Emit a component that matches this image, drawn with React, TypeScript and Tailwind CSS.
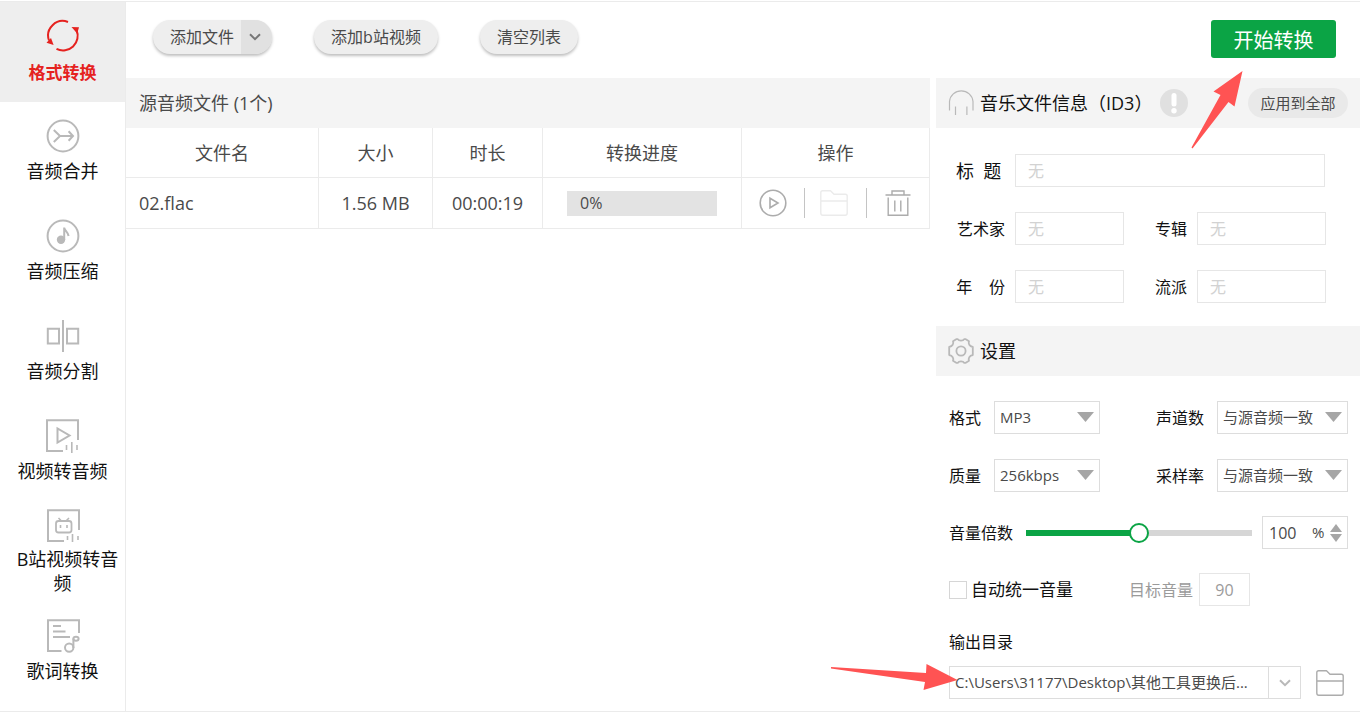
import { useState, type ReactNode } from "react";

type IconProps = { className?: string };

const line = {
  fill: "none",
  stroke: "currentColor",
  strokeWidth: 2,
} as const;

function ConvertIcon() {
  return (
    <svg viewBox="0 0 34 34" width="34" height="34" {...line}>
      <path d="M22 3A14.6 14.6 0 0 0 3 21.500" />
      <path d="M10.500 29.800A14.600 14.600 0 0 0 30.500 11" />
      <path d="M0.500 23.800 5 19 7.600 26Z" fill="currentColor" stroke="none" />
      <path d="M25.500 8 33 8.200 31.200 14.600Z" fill="currentColor" stroke="none" />
    </svg>
  );
}

function MergeIcon() {
  return (
    <svg viewBox="0 0 34 34" width="34" height="34" {...line}>
      <circle cx="17" cy="17" r="15.4" />
      <path d="M7.8 11 14 17 7.8 23M13.5 17H27M22.6 12.2 27 17 22.6 21.8" />
    </svg>
  );
}

function CompressIcon() {
  return (
    <svg viewBox="0 0 34 34" width="34" height="34" {...line}>
      <circle cx="17" cy="17" r="15.4" />
      <circle cx="15" cy="20.8" r="4.2" fill="currentColor" stroke="none" />
      <path d="M18.2 21V8.5C18.6 12 22 13 22.6 17" />
    </svg>
  );
}

function SplitIcon() {
  return (
    <svg viewBox="0 0 34 34" width="34" height="34" {...line}>
      <path d="M17 1V33M1.8 9.8H13V24.6H1.8ZM21 9.8H32.2V24.6H21Z" />
    </svg>
  );
}

function VideoIcon() {
  return (
    <svg viewBox="0 0 34 34" width="34" height="34" {...line}>
      <path d="M32 21V1.2H1V32H17M11.5 9.5V23.5L23.5 16.5Z" />
      <path d="M20.5 26V31M25.8 23V34M31 26V31" strokeWidth="1.6" />
    </svg>
  );
}

function BiliIcon() {
  return (
    <svg viewBox="0 0 34 34" width="34" height="34" {...line}>
      <path d="M33 21V1.2H2V32H18" />
      <rect x="10" y="12" width="15.5" height="11.5" rx="2.5" strokeWidth="1.8" />
      <path d="M12.5 9 15 11.5M23 9 20.5 11.5M14.5 16V19M21 16V19" strokeWidth="1.6" />
      <path d="M21.5 27V31M26.5 25V33M32 27V31" strokeWidth="1.6" />
    </svg>
  );
}

function LyricsIcon() {
  return (
    <svg viewBox="0 0 34 34" width="34" height="34" {...line}>
      <path d="M33 14V1.2H2V32H15.5M7 7H15M7 12.5H19.5M7 18H24" />
      <circle cx="23.2" cy="28.6" r="4.2" />
      <path d="M27.4 29V19.5" />
      <ellipse cx="30" cy="19.8" rx="2.6" ry="2" />
    </svg>
  );
}

function HeadphoneIcon() {
  return (
    <svg viewBox="0 0 26 28" width="26" height="28" fill="none" stroke="#b9b9b9" strokeWidth="1.2">
      <path d="M1.500 21.500V12.500A11.800 11.800 0 0 1 25 12.500V21.500M7.500 17.500V26M18.900 17.500V26" />
    </svg>
  );
}

function GearIcon() {
  return (
    <svg viewBox="0 0 26 26" width="26" height="26" fill="none" stroke="#b9b9b9" strokeWidth="1.8" strokeLinejoin="round">
      <path d="M8.2 1.2H9.8C10.8 3.2 15.2 3.2 16.2 1.2H17.8L21 3.2C20 5.8 21.5 8.4 24.8 9V17C21.5 17.6 20 20.2 21 22.8L17.8 24.8H16.2C15.2 22.8 10.8 22.8 9.8 24.8H8.2L5 22.8C6 20.2 4.5 17.6 1.2 17V9C4.5 8.4 6 5.8 5 3.2Z" />
      <circle cx="13" cy="13" r="4.6" />
    </svg>
  );
}

function FolderIcon({ className }: IconProps) {
  return (
    <svg className={className} viewBox="0 0 28 26" width="28" height="26" fill="none" stroke="currentColor" strokeWidth="1.4" strokeLinejoin="round">
      <path d="M0.8 22.5V2.6C0.8 1.4 1.4 0.8 2.6 0.8H10.5L14 4.2H25.4C26.6 4.2 27.2 4.8 27.2 6V23C27.2 24.4 26.6 25.2 25.2 25.2H2.8C1.4 25.2 0.8 24.4 0.8 23ZM0.8 11H27.2" />
    </svg>
  );
}

function PlayIcon() {
  return (
    <svg viewBox="0 0 28 28" width="28" height="28" fill="none" stroke="currentColor" strokeWidth="1.6">
      <circle cx="14" cy="14" r="12.8" />
      <path d="M11 9.2V18.8L19 14Z" />
    </svg>
  );
}

function TrashIcon() {
  return (
    <svg viewBox="0 0 26 26" width="26" height="26" fill="none" stroke="currentColor" strokeWidth="1.4">
      <path d="M0.5 5H25.5M7 5V1H19V5M3.2 7.5V25.2H22.8V7.5M9.8 10.5V21.5M15.8 10.5V21.5" />
    </svg>
  );
}

function Triangle({ className, up }: IconProps & { up?: boolean }) {
  return (
    <svg className={className} viewBox="0 0 16 10" preserveAspectRatio="none" fill="#a6a6a6">
      <path d={up ? "M0 10H16L8 0Z" : "M0 0H16L8 10Z"} />
    </svg>
  );
}

function Chevron({ className }: IconProps) {
  return (
    <svg className={className} viewBox="0 0 12 8" width="12" height="8" fill="none" stroke="currentColor" strokeWidth="2">
      <path d="M1 1.2 6 6.2 11 1.2" />
    </svg>
  );
}

const single = "gap-1.5 px-2.5 pb-0.5 text-lg text-[#111111]";

const tools: { label: string; icon: ReactNode; style: string }[] = [
  { label: "格式转换", icon: <ConvertIcon />, style: "gap-2 bg-[#eeeeee] px-2.5 text-[17px] font-bold text-[#e5221f]" },
  { label: "音频合并", icon: <MergeIcon />, style: single },
  { label: "音频压缩", icon: <CompressIcon />, style: single },
  { label: "音频分割", icon: <SplitIcon />, style: single },
  { label: "视频转音频", icon: <VideoIcon />, style: single },
  { label: "B站视频转音频", icon: <BiliIcon />, style: "gap-1 px-1.5 indent-2.5 text-lg text-[#111111]" },
  { label: "歌词转换", icon: <LyricsIcon />, style: single },
];

function Sidebar() {
  return (
    <nav className="w-[126px] shrink-0 border-r border-[#ebebeb]">
      {tools.map((t, i) => (
        <button
          key={t.label}
          type="button"
          className={`flex h-[100px] w-full flex-col items-center justify-center leading-6 ${t.style}`}
        >
          <span className={i === 0 ? "indent-0 text-[#e5221f]" : "indent-0 text-[#b9b9b9]"}>{t.icon}</span>
          <span>{t.label}</span>
        </button>
      ))}
    </nav>
  );
}

function Toolbar() {
  return (
    <header className="flex h-[76px] items-start pt-[18px] pr-6 pl-[27px] text-base text-[#4a4a4a]">
      <div className="flex h-[34px] overflow-hidden rounded-full bg-[#eeeeee] shadow-[0_2px_3px_rgba(0,0,0,0.25)]">
        <button type="button" className="w-[88px] pl-2.5">添加文件</button>
        <button type="button" aria-label="更多添加方式" className="flex w-[31px] items-center justify-center bg-[#e1e1e1] pr-1 text-[#777777]">
          <Chevron />
        </button>
      </div>
      <button type="button" className="ml-[42px] h-[34px] w-[124px] rounded-full bg-[#eeeeee] shadow-[0_2px_3px_rgba(0,0,0,0.25)]">
        添加b站视频
      </button>
      <button type="button" className="ml-[42px] h-[34px] w-[98px] rounded-full bg-[#eeeeee] shadow-[0_2px_3px_rgba(0,0,0,0.25)]">
        清空列表
      </button>
      <button type="button" className="ml-auto h-[38px] w-[125px] rounded-[3px] bg-[#0ba445] pt-1 text-xl text-white">
        开始转换
      </button>
    </header>
  );
}

function FileList() {
  return (
    <section className="min-w-0 flex-1 text-lg text-[#4a4a4a]">
      <h2 className="flex h-[50px] items-center bg-[#f4f4f4] px-[13px]">源音频文件 (1个)</h2>
      <table className="w-full table-fixed border-separate border-spacing-0 text-center">
        <colgroup>
          <col />
          <col className="w-[114px]" />
          <col className="w-[110px]" />
          <col className="w-[199px]" />
          <col className="w-[188px]" />
        </colgroup>
        <thead>
          <tr className="h-[50px]">
            {["文件名", "大小", "时长", "转换进度", "操作"].map((h) => (
              <th key={h} className="border-r border-b border-[#ebebeb] p-0 font-normal">{h}</th>
            ))}
          </tr>
        </thead>
        <tbody>
          <tr className="h-[51px]">
            <td className="border-r border-b border-[#ebebeb] px-[13px] py-0 text-left">02.flac</td>
            <td className="border-r border-b border-[#ebebeb] p-0">1.56 MB</td>
            <td className="border-r border-b border-[#ebebeb] p-0">00:00:19</td>
            <td className="border-r border-b border-[#ebebeb] px-6 py-0">
              <div className="h-[25px] bg-[#e3e3e3] px-[13px] text-left text-base leading-[25px]">0%</div>
            </td>
            <td className="border-r border-b border-[#ebebeb] p-0">
              <div className="flex items-center justify-center text-[#acacac]">
                <button type="button" aria-label="播放" className="flex w-[62px] justify-center">
                  <PlayIcon />
                </button>
                <button type="button" aria-label="打开文件夹" disabled className="flex h-[30px] w-16 items-center justify-center border-x border-[#c4c4c4] pr-1 text-[#ebebeb]">
                  <FolderIcon />
                </button>
                <button type="button" aria-label="删除" className="flex w-[62px] justify-center">
                  <TrashIcon />
                </button>
              </div>
            </td>
          </tr>
        </tbody>
      </table>
    </section>
  );
}

function TagField({ id, label, labelClass, boxClass }: { id: string; label: string; labelClass: string; boxClass: string }) {
  return (
    <>
      <label htmlFor={id} className={labelClass}>{label}</label>
      <input
        id={id}
        type="text"
        placeholder="无"
        className={`h-[33px] border border-[#e6e6e6] px-3 text-base text-[#4a4a4a] outline-none placeholder:text-[#d2d2d2] ${boxClass}`}
      />
    </>
  );
}

function Id3Panel() {
  return (
    <section>
      <div className="flex h-[50px] items-center bg-[#f4f4f4] pr-3 pl-3">
        <HeadphoneIcon />
        <h2 className="ml-1.5 text-lg whitespace-nowrap text-[#111111]">音乐文件信息（ID3）</h2>
        <svg className="ml-2" viewBox="0 0 28 28" width="28" height="28" role="img" aria-label="提示">
          <circle cx="14" cy="14" r="14" fill="#e0e0e0" />
          <path d="M14 6.5V15" stroke="#fff" strokeWidth="5" strokeLinecap="round" />
          <circle cx="14" cy="21.8" r="2.7" fill="#fff" />
        </svg>
        <button type="button" className="ml-auto h-[30px] w-[100px] rounded-full bg-[#e9e9e9] text-[15px] text-[#4a4a4a]">
          应用到全部
        </button>
      </div>
      <div className="grid grid-cols-[49px_119px_63px_139px] items-center gap-y-[25px] pt-[26px] pb-[23px] pl-5 text-base text-[#111111]">
        <TagField id="title" label="标  题" labelClass="whitespace-pre text-lg" boxClass="col-span-3 ml-2.5 w-[310px]" />
        <TagField id="artist" label="艺术家" labelClass="text-right" boxClass="ml-2.5 w-[109px]" />
        <TagField id="album" label="专辑" labelClass="text-right" boxClass="ml-2.5 w-[129px]" />
        <TagField id="year" label="年    份" labelClass="whitespace-pre text-right" boxClass="ml-2.5 w-[109px]" />
        <TagField id="genre" label="流派" labelClass="text-right" boxClass="ml-2.5 w-[129px]" />
      </div>
    </section>
  );
}

function SelectField({ id, label, value, className }: { id: string; label: string; value: string; className: string }) {
  return (
    <>
      <label htmlFor={id}>{label}</label>
      <div className={`relative ${className}`}>
        <select id={id} className="block h-[33px] w-full appearance-none border border-[#dddddd] bg-white pr-6 pl-[5px] text-[15px] text-[#4a4a4a] outline-none">
          <option>{value}</option>
        </select>
        <Triangle className="pointer-events-none absolute top-[11px] right-1.5 h-[10px] w-[17px]" />
      </div>
    </>
  );
}

function SettingsPanel() {
  const [volume, setVolume] = useState(100);
  return (
    <section className="text-base text-[#111111]">
      <div className="flex h-[50px] items-center gap-1.5 bg-[#f4f4f4] px-3">
        <GearIcon />
        <h2 className="text-lg">设置</h2>
      </div>
      <div className="flex flex-col gap-6 pt-[25px] pr-3 pl-[13px]">
        <div className="grid grid-cols-[45px_162px_61px_1fr] items-center gap-y-[25px]">
          <SelectField id="format" label="格式" value="MP3" className="w-[106px]" />
          <SelectField id="channels" label="声道数" value="与源音频一致" className="w-full" />
          <SelectField id="quality" label="质量" value="256kbps" className="w-[106px]" />
          <SelectField id="rate" label="采样率" value="与源音频一致" className="w-full" />
        </div>
        <div className="flex items-center">
          <label htmlFor="volume">音量倍数</label>
          <input
            id="volume"
            type="range"
            min={0}
            max={200}
            value={volume}
            onChange={(e) => setVolume(Number(e.target.value))}
            style={{ background: `linear-gradient(to right, #0ba445 ${volume / 2}%, #d6d6d6 ${volume / 2}%)` }}
            className="mr-2.5 ml-[13px] h-1.5 min-w-0 flex-1 appearance-none outline-none [&::-webkit-slider-thumb]:h-5 [&::-webkit-slider-thumb]:w-5 [&::-webkit-slider-thumb]:appearance-none [&::-webkit-slider-thumb]:rounded-full [&::-webkit-slider-thumb]:border-2 [&::-webkit-slider-thumb]:border-solid [&::-webkit-slider-thumb]:border-[#0ba445] [&::-webkit-slider-thumb]:bg-white"
          />
          <div className="flex h-[33px] w-[86px] items-center border border-[#dddddd] pr-[5px] pl-1.5 text-[#4a4a4a]">
            <input
              type="text"
              aria-label="音量倍数数值"
              value={volume}
              onChange={(e) => setVolume(Number(e.target.value) || 0)}
              className="w-[43px] min-w-0 outline-none"
            />
            <span className="text-[15px]">%</span>
            <span className="ml-auto flex flex-col gap-0.5">
              <button type="button" aria-label="增加" onClick={() => setVolume(Math.min(200, volume + 1))}>
                <Triangle up className="h-2 w-3" />
              </button>
              <button type="button" aria-label="减少" onClick={() => setVolume(Math.max(0, volume - 1))}>
                <Triangle className="h-2 w-3" />
              </button>
            </span>
          </div>
        </div>
        <div className="flex items-center">
          <input id="auto" type="checkbox" className="h-[18px] w-[18px] appearance-none border border-[#d6d6d6] checked:bg-[#0ba445]" />
          <label htmlFor="auto" className="ml-1 text-[17px]">自动统一音量</label>
          <label htmlFor="target" className="ml-14 text-[#9b9b9b]">目标音量</label>
          <input id="target" type="text" defaultValue="90" disabled className="ml-1.5 h-[33px] w-[51px] border border-[#e6e6e6] bg-white text-center text-[#9b9b9b]" />
        </div>
        <div>
          <label htmlFor="output" className="block leading-6">输出目录</label>
          <div className="mt-3 flex items-center">
            <div className="flex h-[33px] w-[352px] border border-[#dddddd]">
              <input
                id="output"
                type="text"
                readOnly
                value="C:\Users\31177\Desktop\其他工具更换后..."
                className="relative z-10 min-w-0 flex-1 pl-[5px] text-[15px] text-[#4a4a4a] outline-none"
              />
              <button type="button" aria-label="选择输出目录" className="flex w-8 items-center justify-center border-l border-[#dddddd] text-[#b9b9b9]">
                <Chevron />
              </button>
            </div>
            <button type="button" aria-label="浏览" className="ml-[15px] text-[#acacac]">
              <FolderIcon />
            </button>
          </div>
        </div>
      </div>
    </section>
  );
}

export default function App() {
  return (
    <div className="bg-white pt-px font-['Open_Sans','Noto_Sans_CJK_SC',sans-serif]" lang="zh-CN">
      <div className="relative flex border-y border-[#ebebeb]">
        <Sidebar />
        <main className="min-w-0 flex-1">
          <Toolbar />
          <div className="flex gap-1.5 pb-3">
            <FileList />
            <aside className="w-[424px] shrink-0">
              <Id3Panel />
              <SettingsPanel />
            </aside>
          </div>
        </main>
        <svg className="pointer-events-none absolute top-[68px] right-[116px]" viewBox="0 0 54 80" width="54" height="80" fill="#ff5353" aria-hidden="true">
          <path d="M52.500 1 23.500 21.500 30.500 25 1.500 77.500 2.500 78.500 38.500 32 44.500 36.500Z" />
        </svg>
        <svg className="pointer-events-none absolute right-[402px] bottom-[20px]" viewBox="0 0 128 28" width="128" height="28" fill="#ff5353" aria-hidden="true">
          <path d="M1 4 96 10 96.500 1 127.500 17 93.500 27 95 19 1 5.500Z" />
        </svg>
      </div>
    </div>
  );
}
